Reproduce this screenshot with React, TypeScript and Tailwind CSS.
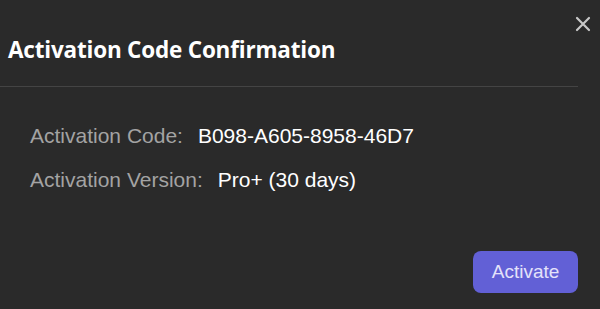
export default function App() {
    return (
        <div className="w-[600px] h-[309px] bg-[#2a2a2a] flex flex-col relative overflow-hidden">
            <button className="absolute top-[15px] right-[8px] text-[#c8c8c8]">
                <svg width="18" height="18" viewBox="0 0 18 18" fill="none" stroke="currentColor" strokeWidth="2.2" strokeLinecap="round">
                    <path d="M3 3 L15 15 M15 3 L3 15" />
                </svg>
            </button>
            <div className="px-[8px] pt-[34px] pb-[20px] border-b border-[#444444] w-[578px]">
                <h1 className="text-[22.5px] font-bold text-white leading-[32px] tracking-[-0.2px] font-['Open_Sans',sans-serif]">Activation Code Confirmation</h1>
            </div>
            <div className="flex flex-col gap-[19px] pl-[30px] pt-[36px] font-['Liberation_Sans',Arial,sans-serif] text-[21px] leading-[25px]">
                <div className="flex gap-[15px]">
                    <span className="text-[#a3a3a3]">Activation Code:</span>
                    <span className="text-white">B098-A605-8958-46D7</span>
                </div>
                <div className="flex gap-[15px]">
                    <span className="text-[#a3a3a3]">Activation Version:</span>
                    <span className="text-white">Pro+ (30 days)</span>
                </div>
            </div>
            <div className="flex justify-end mt-auto pr-[22px] pb-[16px]">
                <button className="w-[105px] h-[42px] rounded-[8px] bg-[#6260d6] text-[#e4e2fa] text-[19px] font-['Liberation_Sans',Arial,sans-serif]">
                    Activate
                </button>
            </div>
        </div>
    );
}
